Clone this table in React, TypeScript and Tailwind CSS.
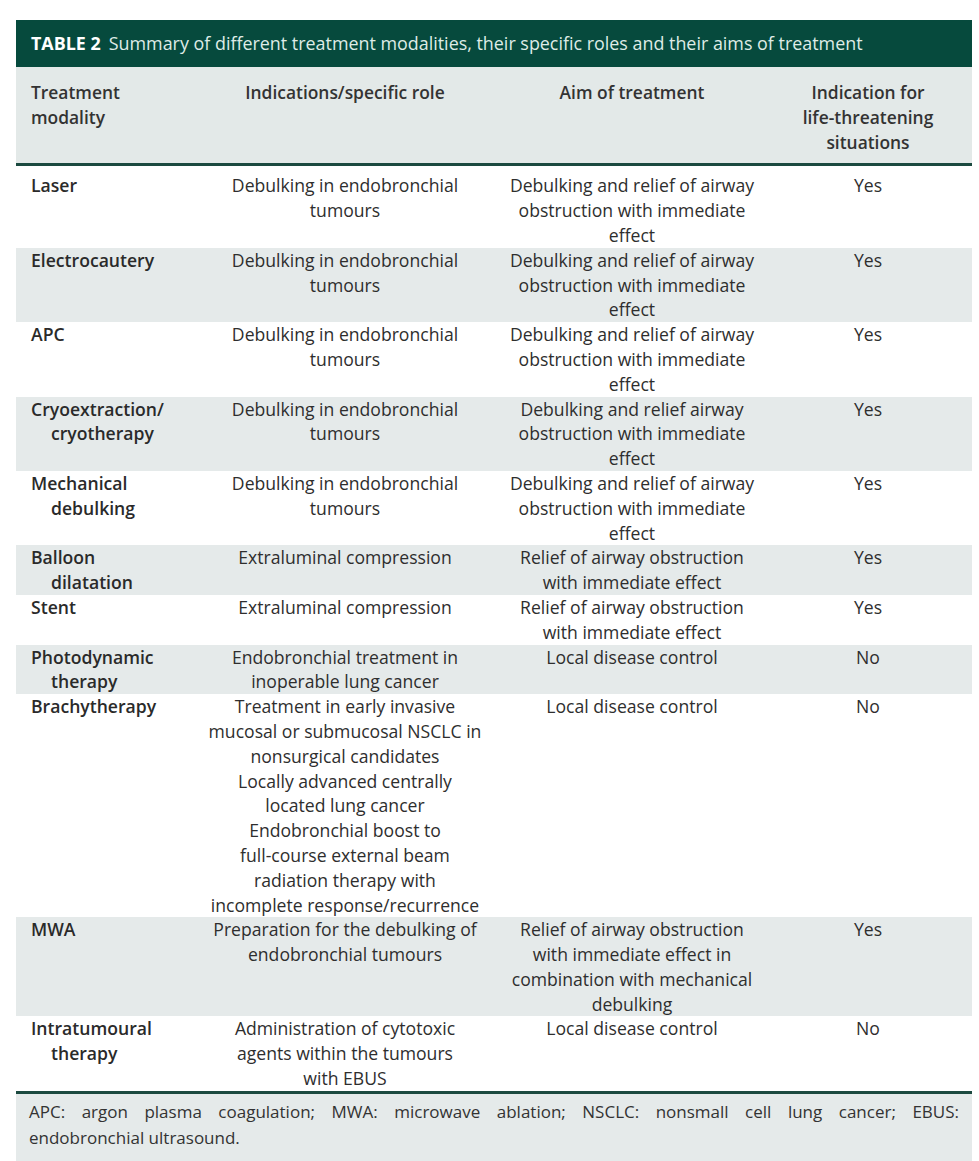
type Row = {
  name: string[]
  role: string[]
  aim: string[]
  life: string
}

const rows: Row[] = [
  {
    name: ["Laser"],
    role: ["Debulking in endobronchial", "tumours"],
    aim: ["Debulking and relief of airway", "obstruction with immediate", "effect"],
    life: "Yes",
  },
  {
    name: ["Electrocautery"],
    role: ["Debulking in endobronchial", "tumours"],
    aim: ["Debulking and relief of airway", "obstruction with immediate", "effect"],
    life: "Yes",
  },
  {
    name: ["APC"],
    role: ["Debulking in endobronchial", "tumours"],
    aim: ["Debulking and relief of airway", "obstruction with immediate", "effect"],
    life: "Yes",
  },
  {
    name: ["Cryoextraction/", "cryotherapy"],
    role: ["Debulking in endobronchial", "tumours"],
    aim: ["Debulking and relief airway", "obstruction with immediate", "effect"],
    life: "Yes",
  },
  {
    name: ["Mechanical", "debulking"],
    role: ["Debulking in endobronchial", "tumours"],
    aim: ["Debulking and relief of airway", "obstruction with immediate", "effect"],
    life: "Yes",
  },
  {
    name: ["Balloon", "dilatation"],
    role: ["Extraluminal compression"],
    aim: ["Relief of airway obstruction", "with immediate effect"],
    life: "Yes",
  },
  {
    name: ["Stent"],
    role: ["Extraluminal compression"],
    aim: ["Relief of airway obstruction", "with immediate effect"],
    life: "Yes",
  },
  {
    name: ["Photodynamic", "therapy"],
    role: ["Endobronchial treatment in", "inoperable lung cancer"],
    aim: ["Local disease control"],
    life: "No",
  },
  {
    name: ["Brachytherapy"],
    role: [
      "Treatment in early invasive",
      "mucosal or submucosal NSCLC in",
      "nonsurgical candidates",
      "Locally advanced centrally",
      "located lung cancer",
      "Endobronchial boost to",
      "full-course external beam",
      "radiation therapy with",
      "incomplete response/recurrence",
    ],
    aim: ["Local disease control"],
    life: "No",
  },
  {
    name: ["MWA"],
    role: ["Preparation for the debulking of", "endobronchial tumours", "", ""],
    aim: [
      "Relief of airway obstruction",
      "with immediate effect in",
      "combination with mechanical",
      "debulking",
    ],
    life: "Yes",
  },
  {
    name: ["Intratumoural", "therapy"],
    role: ["Administration of cytotoxic", "agents within the tumours", "with EBUS"],
    aim: ["Local disease control"],
    life: "No",
  },
]

function Lines({ lines, hang }: { lines: string[]; hang?: boolean }) {
  return (
    <>
      {lines.map((l, i) => (
        <span
          key={i}
          className={`block min-h-[24.8px] whitespace-nowrap ${hang && i > 0 ? "pl-5" : ""}`}
        >
          {l}
        </span>
      ))}
    </>
  )
}

export default function App() {
  return (
    <div className="min-h-[1161px] bg-white pt-5 pl-4 font-['Open_Sans','Noto_Sans',sans-serif] text-[17.6px] text-[#2e2e2e]">
      <div className="w-[956px]">
        {/* caption bar */}
        <div className="flex h-[47px] items-center bg-[#064a3d] pl-[15px] text-[17.9px] text-[#dfece7]">
          <span className="mr-2 font-bold text-white">TABLE 2</span>
          <span>Summary of different treatment modalities, their specific roles and their aims of treatment</span>
        </div>

        {/* column heads */}
        <div className="grid grid-cols-[186px_286px_288px_196px] bg-[#e3e9e8] pt-[13px] pb-[9px] text-[17.4px] font-semibold leading-[24.6px] text-[#333]">
          <div className="pl-[15px]">
            <Lines lines={["Treatment", "modality"]} />
          </div>
          <div className="text-center">Indications/specific role</div>
          <div className="text-center">Aim of treatment</div>
          <div className="pr-3 text-center">
            <Lines lines={["Indication for", "life-threatening", "situations"]} />
          </div>
        </div>
        <div className="h-[3px] bg-[#1b4a40]" />

        {/* body */}
        <div className="pt-[7px] leading-[24.8px]">
          {rows.map((r, i) => (
            <div
              key={r.name.join(" ")}
              className={`grid grid-cols-[186px_286px_288px_196px] ${i % 2 === 1 ? "bg-[#e5eaea]" : "bg-white"}`}
            >
              <div className="pl-[15px] font-semibold text-[#2a2a2a]">
                <Lines lines={r.name} hang />
              </div>
              <div className="text-center">
                <Lines lines={r.role} />
              </div>
              <div className="text-center">
                <Lines lines={r.aim} />
              </div>
              <div className="pr-3 text-center">{r.life}</div>
            </div>
          ))}
        </div>
        <div className="h-[3px] bg-[#1b4a40]" />

        {/* footnote */}
        <div className="h-[67px] bg-[#e5eaea] px-[13px] pt-[5px] text-[17px] leading-[26px] text-[#333]">
          <span className="block text-justify [text-align-last:justify]">
            APC: argon plasma coagulation; MWA: microwave ablation; NSCLC: nonsmall cell lung cancer; EBUS:
          </span>
          <span className="block">endobronchial ultrasound.</span>
        </div>
      </div>
    </div>
  )
}
